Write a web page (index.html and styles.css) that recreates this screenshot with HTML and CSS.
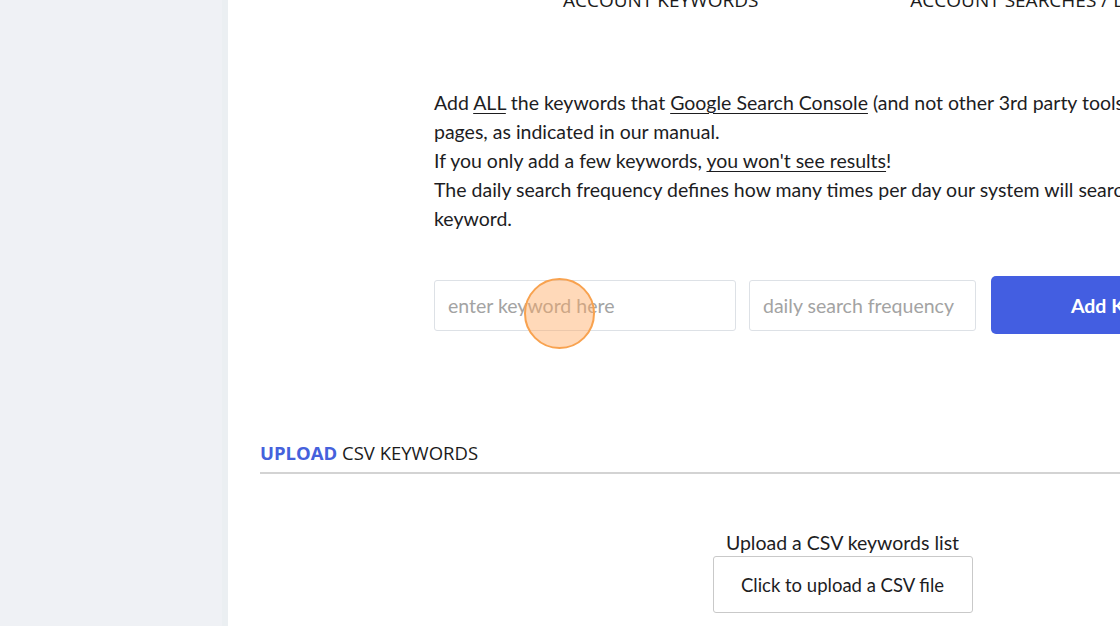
FILE: index.html
```html
<!DOCTYPE html>
<html>
<head>
<meta charset="utf-8">
<link rel="stylesheet" href="styles.css">
</head>
<body>
<div class="page">
  <aside class="sidebar"></aside>
  <main class="main">
    <div class="tabs">
      <div class="tab tab-keywords">ACCOUNT KEYWORDS</div>
      <div class="tab tab-searches">ACCOUNT SEARCHES / DAY</div>
    </div>

    <section class="add-section">
      <div class="intro">
        <p class="line">Add <u>ALL</u> the keywords that <u>Google Search Console</u> (and not other 3rd party tools) shows for your</p>
        <p class="line">pages, as indicated in our manual.</p>
        <p class="line">If you only add a few keywords, <u>you won't see results</u>!</p>
        <p class="line">The daily search frequency defines how many times per day our system will search for each</p>
        <p class="line">keyword.</p>
      </div>
      <div class="form-row">
        <div class="field-wrap">
          <input class="field field-keyword" type="text" placeholder="enter keyword here">
          <span class="click-marker"></span>
        </div>
        <input class="field field-freq" type="text" placeholder="daily search frequency">
        <button class="btn-add">Add Keyword</button>
      </div>
    </section>

    <section class="upload-section">
      <h2 class="section-title"><span class="accent">UPLOAD</span> CSV KEYWORDS</h2>
      <div class="upload-box">
        <div class="upload-label">Upload a CSV keywords list</div>
        <button class="btn-upload">Click to upload a CSV file</button>
      </div>
    </section>
  </main>
</div>
</body>
</html>
```

FILE: styles.css
```css
* { box-sizing: border-box; }
html, body { margin: 0; padding: 0; height: 100%; }
body {
  font-family: "Lato", "Noto Sans", sans-serif;
  color: #1d1d1f;
  background: #ffffff;
  overflow: hidden;
}
.page {
  display: flex;
  width: 1120px;
  height: 626px;
  overflow: hidden;
}
.sidebar {
  flex: 0 0 228px;
  background: #eff1f5;
  border-right: 6px solid #ebeff2;
}
.main {
  flex: 1 1 auto;
  min-width: 0;
  overflow: hidden;
  padding-left: 32px;
}
.tabs {
  display: flex;
  margin-top: -12px;
  height: 24px;
  font-family: "Open Sans", "Noto Sans", sans-serif;
  font-size: 19px;
  line-height: 24px;
  white-space: nowrap;
  color: #1b1b1b;
}
.tab-keywords { margin-left: 303px; }
.tab-searches { margin-left: 152px; }

.add-section {
  padding-left: 174px;
  margin-top: 76px;
}
.intro { font-size: 19.5px; line-height: 29px; color: #1d1d1f; }
.line { margin: 0; white-space: nowrap; }
.line u { text-underline-offset: 3px; text-decoration-thickness: 1px; }

.form-row {
  display: flex;
  align-items: center;
  gap: 14px;
  margin-top: 43px;
  height: 58px;
  white-space: nowrap;
}
.field-wrap { position: relative; flex: 0 0 302px; }
.field {
  height: 51px;
  border: 1px solid #dde1e6;
  border-radius: 3px;
  padding: 0 13px;
  font-family: "Lato", "Noto Sans", sans-serif;
  font-size: 19.5px;
  color: #333;
  background: #fff;
  outline: none;
}
.field::placeholder { color: #a3a3a3; }
.field-keyword { width: 302px; }
.field-freq { flex: 0 0 227px; width: 227px; margin-left: -1px; }
.click-marker {
  position: absolute;
  left: 90px;
  top: -2px;
  width: 71px;
  height: 71px;
  border-radius: 50%;
  background: rgba(255, 170, 100, 0.45);
  border: 2px solid #f8a24f;
}
.btn-add {
  flex: 0 0 278px;
  height: 58px;
  border: none;
  border-radius: 5px;
  background: #435ee1;
  color: #fff;
  font-family: "Lato", "Noto Sans", sans-serif;
  font-weight: 700;
  font-size: 19.5px;
  margin-left: 1px;
}

.upload-section { margin-top: 107px; }
.section-title {
  margin: 0;
  font-family: "Open Sans", "Noto Sans", sans-serif;
  font-weight: 400;
  font-size: 18.5px;
  line-height: 24px;
  color: #1b1b1b;
  padding-bottom: 7px;
  border-bottom: 2px solid #d3d3d3;
  width: 1000px;
}
.section-title .accent { color: #4561dc; font-weight: 700; }

.upload-box {
  display: flex;
  flex-direction: column;
  align-items: center;
  width: 1165px;
  margin-top: 57px;
}
.upload-label { font-size: 19.5px; line-height: 24px; color: #1d1d1f; }
.btn-upload {
  margin-top: 1px;
  width: 260px;
  height: 57px;
  background: #fff;
  border: 1px solid #c9c9c9;
  border-radius: 3px;
  font-family: "Lato", "Noto Sans", sans-serif;
  font-size: 18.5px;
  color: #1d1d1f;
}
```
